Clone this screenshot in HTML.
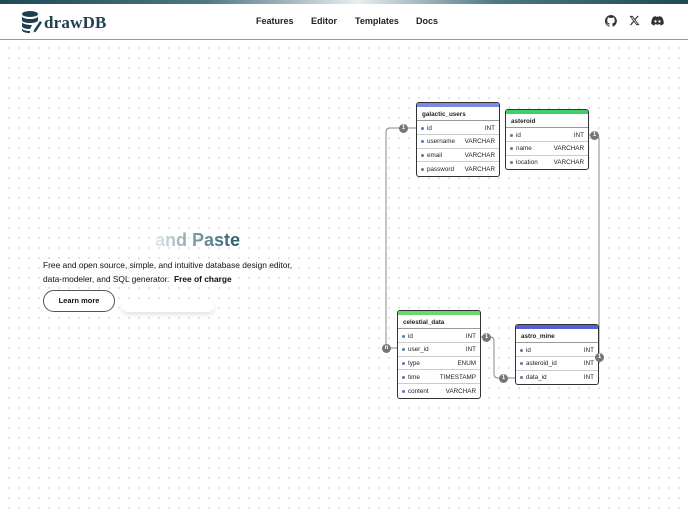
<!DOCTYPE html>
<html><head><meta charset="utf-8"><style>
*{margin:0;padding:0;box-sizing:border-box}
body{width:688px;height:512px;overflow:hidden;position:relative;font-family:"Liberation Sans",sans-serif;background:#fff;
background-image:radial-gradient(circle,#c0c0c0 0.6px,transparent 0.9px);background-size:10px 10px;background-position:4px 3px}
.top{position:absolute;left:0;top:0;width:688px;height:4px;background:linear-gradient(90deg,#1c4a57 0%,#4f7784 30%,#e9eef0 52%,#4f7784 72%,#1c4a57 100%)}
.hdr{position:absolute;left:0;top:4px;width:688px;height:36px;background:#fff;border-bottom:1px solid #9a9a9a}
.logo{position:absolute;left:44px;top:9px;font-family:"Liberation Serif",serif;font-weight:bold;font-size:17px;color:#1f3f4d;letter-spacing:0.2px}
.nav{position:absolute;top:12px;font-size:9px;font-weight:bold;color:#222}
.t{position:absolute;background:#fff;border:1px solid #333;border-radius:3px;overflow:hidden;font-size:6.3px;color:#222}
.t .bar{height:4px}
.t .h{height:14px;padding:4px 0 0 5px;font-weight:bold;border-bottom:1px solid #999}
.t .r{height:13.8px;padding:3.5px 4px 0 10px;position:relative;border-bottom:1px solid #ccc;display:flex;justify-content:space-between}
.t .r:last-child{border-bottom:none}
.t .r:before{content:"";position:absolute;left:4px;top:5.5px;width:3px;height:3px;border-radius:50%;background:#5a7ba8}
.c{position:absolute;width:9px;height:9px;border-radius:50%;background:#777;color:#fff;font-size:6px;text-align:center;line-height:9px;font-weight:bold}
</style></head><body>
<div class="top"></div>
<div class="hdr">
<svg style="position:absolute;left:21px;top:6px" width="22" height="24" viewBox="0 0 22 24"><ellipse cx="9" cy="4" rx="8" ry="3" fill="#1f3f4d"/><path d="M1 6v4c0 2 4 3 8 3s8-1 8-3V6c0 2-4 3-8 3S1 8 1 6zM1 12v4c0 2 4 3 8 3l2-4c-4 0-10-1-10-3zM1 18v2c0 2 4 3 8 3v-2c-4 0-8-1-8-3z" fill="#1f3f4d"/><path d="M13 20l6-9 2 1.5-6 9-2.5 1z" fill="#1f3f4d"/></svg>
<div class="logo">drawDB</div>
<div class="nav" style="left:256px">Features</div>
<div class="nav" style="left:311px">Editor</div>
<div class="nav" style="left:355px">Templates</div>
<div class="nav" style="left:416px">Docs</div>
<svg style="position:absolute;left:605px;top:11px" width="12" height="12" viewBox="0 0 16 16"><path fill="#333" d="M8 0a8 8 0 0 0-2.5 15.6c.4 0 .5-.2.5-.4v-1.5c-2.2.5-2.7-1-2.700-1-.4-.9-.9-1.200-.9-1.200-.7-.5.1-.5.1-.5.8.1 1.200.8 1.200.8.7 1.300 1.900.9 2.300.7.1-.5.3-.9.5-1.100-1.800-.2-3.600-.9-3.600-4 0-.9.3-1.600.8-2.100-.1-.2-.4-1 .1-2.100 0 0 .7-.2 2.200.8a7.500 7.500 0 0 1 4 0c1.500-1 2.200-.8 2.200-.8.4 1.100.2 1.900.1 2.100.5.6.8 1.300.8 2.100 0 3.100-1.900 3.800-3.700 4 .3.3.6.8.6 1.500v2.200c0 .2.1.5.6.4A8 8 0 0 0 8 0z"/></svg>
<svg style="position:absolute;left:629px;top:11px" width="11" height="11" viewBox="0 0 24 24"><path fill="#333" d="M18.2 2h3.4l-7.400 8.500L23 22h-6.800l-5.300-7-6.100 7H1.400l7.900-9L1 2h7l4.800 6.400zM17 20h1.900L7 4H5z"/></svg>
<svg style="position:absolute;left:651px;top:12px" width="13" height="10" viewBox="0 0 24 18"><path fill="#333" d="M20 1.500A19 19 0 0 0 15.300 0l-.6 1.200a18 18 0 0 0-5.400 0L8.700 0A19 19 0 0 0 4 1.500C1 6 .2 10.300.6 14.600A19 19 0 0 0 6.400 17.500l1.200-2a12 12 0 0 1-1.900-.9l.5-.4a13.500 13.500 0 0 0 11.600 0l.5.4-1.900.9 1.200 2a19 19 0 0 0 5.800-2.900c.5-5-.8-9.300-3.400-13.100zM8.300 12c-1.100 0-2-1-2-2.300s.9-2.300 2-2.300 2 1 2 2.300-.9 2.300-2 2.300zm7.400 0c-1.100 0-2-1-2-2.300s.9-2.300 2-2.300 2 1 2 2.300-.9 2.300-2 2.300z"/></svg>
</div>

<div style="position:absolute;left:155px;top:230px;font-size:18px;font-weight:bold;background:linear-gradient(90deg,#e6eaec 0%,#8aa5ae 40%,#2b5a68 100%);-webkit-background-clip:text;background-clip:text;color:transparent">and Paste</div>
<div style="position:absolute;left:43px;top:258px;font-size:8.4px;line-height:14px;color:#111">Free and open source, simple, and intuitive database design editor,<br>data-modeler, and SQL generator. &nbsp;<b>Free of charge</b></div>
<div style="position:absolute;left:43px;top:290px;width:72px;height:22px;border:1px solid #555;border-radius:11px;background:#fff;font-size:7.5px;font-weight:bold;text-align:center;line-height:20px;color:#111">Learn more</div>
<div style="position:absolute;left:122px;top:300px;width:92px;height:12px;border-radius:8px;background:#fff;box-shadow:0 3px 5px rgba(0,0,0,0.1)"></div>

<svg style="position:absolute;left:0;top:0" width="688" height="512">
<g fill="none" stroke="#888" stroke-width="1">
<path d="M416 128H390q-4 0-4 4V344q0 4 4 4H397"/>
<path d="M589 135H595q4 0 4 4V364"/>
<path d="M481 337H490q4 0 4 4V374q0 4 4 4H515"/>
</g></svg>

<div class="t" style="left:416px;top:102px;width:84px"><div class="bar" style="background:#7c8ae0"></div><div class="h">galactic_users</div>
<div class="r"><span>id</span><span>INT</span></div><div class="r"><span>username</span><span>VARCHAR</span></div><div class="r"><span>email</span><span>VARCHAR</span></div><div class="r"><span>password</span><span>VARCHAR</span></div></div>
<div class="t" style="left:505px;top:109px;width:84px"><div class="bar" style="background:#3ccf6a"></div><div class="h">asteroid</div>
<div class="r"><span>id</span><span>INT</span></div><div class="r"><span>name</span><span>VARCHAR</span></div><div class="r"><span>location</span><span>VARCHAR</span></div></div>
<div class="t" style="left:397px;top:310px;width:84px"><div class="bar" style="background:#6ad86a"></div><div class="h">celestial_data</div>
<div class="r"><span>id</span><span>INT</span></div><div class="r"><span>user_id</span><span>INT</span></div><div class="r"><span>type</span><span>ENUM</span></div><div class="r"><span>time</span><span>TIMESTAMP</span></div><div class="r"><span>content</span><span>VARCHAR</span></div></div>
<div class="t" style="left:515px;top:324px;width:84px"><div class="bar" style="background:#5b5fd6"></div><div class="h">astro_mine</div>
<div class="r"><span>id</span><span>INT</span></div><div class="r"><span>asteroid_id</span><span>INT</span></div><div class="r"><span>data_id</span><span>INT</span></div></div>

<div class="c" style="left:399px;top:124px">1</div>
<div class="c" style="left:382px;top:344px">n</div>
<div class="c" style="left:590px;top:131px">1</div>
<div class="c" style="left:595px;top:353px">1</div>
<div class="c" style="left:482px;top:333px">1</div>
<div class="c" style="left:499px;top:374px">1</div>
</body></html>
